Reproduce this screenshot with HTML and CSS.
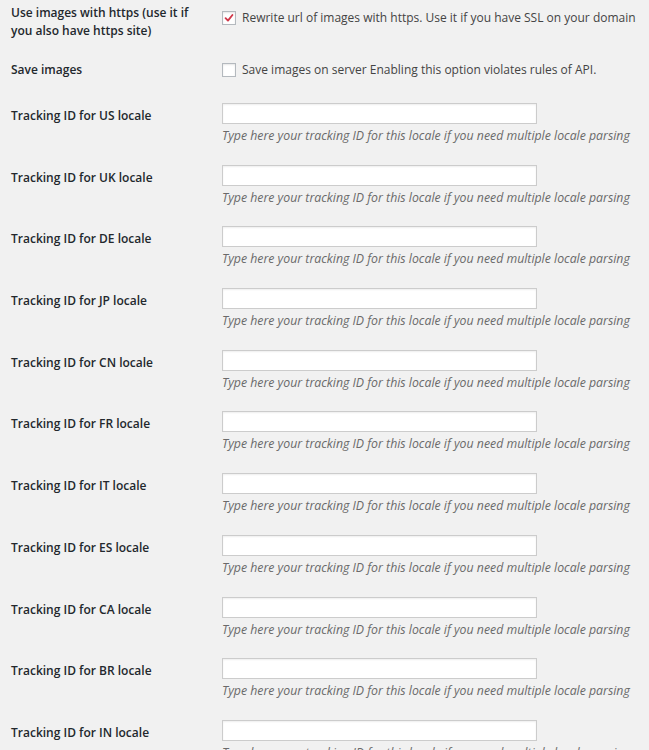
FILE: index.html
```html
<!DOCTYPE html>
<html>
<head>
<meta charset="utf-8">
<link rel="stylesheet" href="styles.css">
</head>
<body>
<div class="form">
  <div class="row row-first">
    <div class="label">Use images with https (use it if you also have https site)</div>
    <div class="field">
      <label class="check"><span class="box checked"><svg viewBox="0 0 14 14" width="14" height="14"><path d="M3 7.2 L5.8 10 L11 3.5" fill="none" stroke="#d0384a" stroke-width="2.2" stroke-linecap="round" stroke-linejoin="round"/></svg></span>Rewrite url of images with https. Use it if you have SSL on your domain</label>
    </div>
  </div>
  <div class="row row-second">
    <div class="label">Save images</div>
    <div class="field">
      <label class="check"><span class="box"></span>Save images on server Enabling this option violates rules of API.</label>
    </div>
  </div>
  <div class="row track"><div class="label">Tracking ID for US locale</div><div class="field"><div class="input"></div><p class="desc">Type here your tracking ID for this locale if you need multiple locale parsing</p></div></div>
  <div class="row track"><div class="label">Tracking ID for UK locale</div><div class="field"><div class="input"></div><p class="desc">Type here your tracking ID for this locale if you need multiple locale parsing</p></div></div>
  <div class="row track"><div class="label">Tracking ID for DE locale</div><div class="field"><div class="input"></div><p class="desc">Type here your tracking ID for this locale if you need multiple locale parsing</p></div></div>
  <div class="row track"><div class="label">Tracking ID for JP locale</div><div class="field"><div class="input"></div><p class="desc">Type here your tracking ID for this locale if you need multiple locale parsing</p></div></div>
  <div class="row track"><div class="label">Tracking ID for CN locale</div><div class="field"><div class="input"></div><p class="desc">Type here your tracking ID for this locale if you need multiple locale parsing</p></div></div>
  <div class="row track"><div class="label">Tracking ID for FR locale</div><div class="field"><div class="input"></div><p class="desc">Type here your tracking ID for this locale if you need multiple locale parsing</p></div></div>
  <div class="row track"><div class="label">Tracking ID for IT locale</div><div class="field"><div class="input"></div><p class="desc">Type here your tracking ID for this locale if you need multiple locale parsing</p></div></div>
  <div class="row track"><div class="label">Tracking ID for ES locale</div><div class="field"><div class="input"></div><p class="desc">Type here your tracking ID for this locale if you need multiple locale parsing</p></div></div>
  <div class="row track"><div class="label">Tracking ID for CA locale</div><div class="field"><div class="input"></div><p class="desc">Type here your tracking ID for this locale if you need multiple locale parsing</p></div></div>
  <div class="row track"><div class="label">Tracking ID for BR locale</div><div class="field"><div class="input"></div><p class="desc">Type here your tracking ID for this locale if you need multiple locale parsing</p></div></div>
  <div class="row track"><div class="label">Tracking ID for IN locale</div><div class="field"><div class="input"></div><p class="desc">Type here your tracking ID for this locale if you need multiple locale parsing</p></div></div>
</div>
</body>
</html>
```
FILE: styles.css
```css
html, body {
  margin: 0;
  padding: 0;
  background: #f1f1f1;
}
body {
  font-family: "Open Sans", "Noto Sans", sans-serif;
  color: #23282d;
  overflow: hidden;
}
.form {
  display: flex;
  flex-direction: column;
}
.row {
  display: grid;
  grid-template-columns: 211px 1fr;
  padding-left: 11px;
  box-sizing: border-box;
}
.label {
  font-size: 12px;
  font-weight: 600;
  line-height: 18px;
  color: #23282d;
  width: 190px;
}
.row-first {
  height: 52px;
  padding-top: 4px;
}
.row-second {
  height: 48px;
  padding-top: 9px;
}
.row-first .field {
  padding-top: 5px;
}
.check {
  display: flex;
  align-items: center;
  gap: 6px;
  font-size: 12px;
  line-height: 18px;
  color: #444;
  white-space: nowrap;
}
.box {
  width: 14px;
  height: 14px;
  box-sizing: border-box;
  border: 1px solid #b4b9be;
  background: #fff;
  box-shadow: inset 0 1px 2px rgba(0,0,0,0.1);
  display: flex;
  align-items: center;
  justify-content: center;
  flex: none;
}
.box svg {
  display: block;
}
.track {
  height: 61.7px;
  padding-top: 3px;
  flex: none;
}
.track .label {
  padding-top: 4px;
}
.input {
  width: 315px;
  height: 21px;
  box-sizing: border-box;
  border: 1px solid #ccc;
  background: #fff;
  box-shadow: inset 0 1px 2px rgba(0,0,0,0.07);
}
.desc {
  margin: 3px 0 0;
  font-size: 12.3px;
  font-style: italic;
  line-height: 18px;
  color: #6a6a6a;
  white-space: nowrap;
}
```
